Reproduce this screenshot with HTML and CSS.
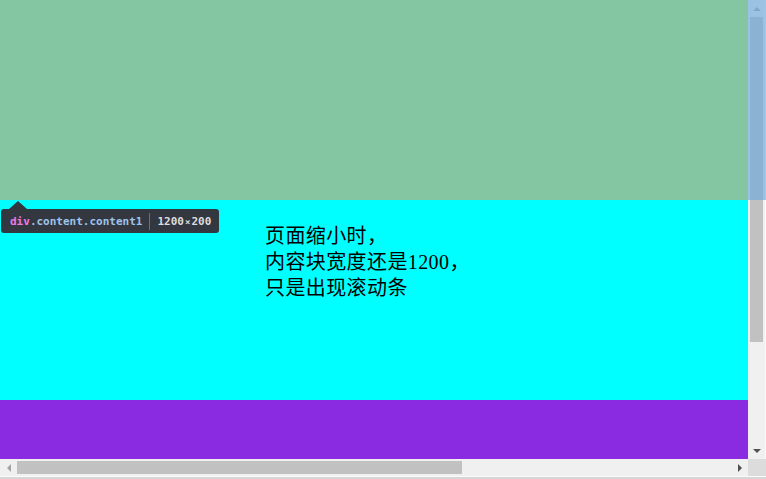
FILE: index.html
```html
<!DOCTYPE html>
<html lang="zh">
<head>
<meta charset="utf-8">
<title>content</title>
<link rel="stylesheet" href="styles.css">
</head>
<body>
<div class="window">
  <div class="main-row">
    <div class="viewport">
      <div class="page">
        <div class="content content1"></div>
        <div class="content content2">
          <p class="note">页面缩小时，<br>内容块宽度还是1200，<br>只是出现滚动条</p>
        </div>
        <div class="content content3"></div>
      </div>
    </div>
    <div class="vscroll">
      <div class="arrow-btn"><span class="tri tri-up"></span></div>
      <div class="vtrack"><div class="vthumb"></div></div>
      <div class="arrow-btn"><span class="tri tri-down"></span></div>
    </div>
  </div>
  <div class="bottom-row">
    <div class="hscroll">
      <div class="harrow-btn"><span class="tri tri-left"></span></div>
      <div class="htrack"><div class="hthumb"></div></div>
      <div class="harrow-btn"><span class="tri tri-right"></span></div>
    </div>
    <div class="corner"></div>
  </div>
  <div class="frame-edge"></div>

  <div class="highlight"></div>
  <div class="tooltip">
    <span class="tip-arrow"></span>
    <span class="tag">div</span><span class="cls">.content.content1</span><span class="sep"></span><span class="dims">1200<span class="times">×</span>200</span>
  </div>
</div>
</body>
</html>
```

FILE: styles.css
```css
html, body {
  margin: 0;
  padding: 0;
  overflow: hidden;
  background: #ffffff;
}

.window {
  position: relative;
  width: 766px;
  height: 479px;
  display: flex;
  flex-direction: column;
}

.main-row {
  display: flex;
  height: 459px;
}

.viewport {
  width: 748px;
  height: 459px;
  overflow: hidden;
}

.page {
  width: 1200px;
}

.content {
  height: 200px;
}

.content1 { background: greenyellow; }
.content2 { background: cyan; }
.content3 { background: blueviolet; }

.note {
  margin: 0;
  padding: 23px 0 0 265px;
  font-family: "Liberation Serif", "Noto Sans CJK SC", serif;
  font-size: 20px;
  line-height: 26px;
  letter-spacing: 0.4px;
  color: #000;
}

/* vertical scrollbar */
.vscroll {
  width: 17px;
  border-right: 1px solid #fafafa;
  background: #f0f0f0;
  display: flex;
  flex-direction: column;
}

.arrow-btn {
  height: 17px;
  display: flex;
  align-items: center;
  justify-content: center;
}

.vtrack {
  flex: 1;
  padding: 0 2px;
}

.vthumb {
  height: 325px;
  background: #c1c1c1;
}

/* bottom */
.bottom-row {
  display: flex;
  height: 17px;
}

.hscroll {
  width: 748px;
  display: flex;
  background: #f0f0f0;
}

.harrow-btn {
  width: 17px;
  display: flex;
  align-items: center;
  justify-content: center;
}

.htrack {
  flex: 1;
  padding: 2px 0;
}

.hthumb {
  width: 445px;
  height: 100%;
  background: #c1c1c1;
}

.corner {
  width: 18px;
  background: #dcdcdc;
}

.frame-edge {
  height: 3px;
  border-top: 1px solid #fbfbfb;
  background: #d6d6d6;
  box-sizing: border-box;
}

.tri {
  width: 0;
  height: 0;
  display: block;
}

.tri-up {
  border-left: 4px solid transparent;
  border-right: 4px solid transparent;
  border-bottom: 4px solid #a3a3a3;
}

.tri-down {
  border-left: 4px solid transparent;
  border-right: 4px solid transparent;
  border-top: 4px solid #505050;
}

.tri-left {
  border-top: 4px solid transparent;
  border-bottom: 4px solid transparent;
  border-right: 4px solid #a3a3a3;
}

.tri-right {
  border-top: 4px solid transparent;
  border-bottom: 4px solid transparent;
  border-left: 4px solid #505050;
}

/* devtools overlay */
.highlight {
  position: absolute;
  left: 0;
  top: 0;
  width: 766px;
  height: 200px;
  background: rgba(111, 168, 220, 0.66);
}

.tooltip {
  position: absolute;
  left: 1px;
  top: 209px;
  height: 24px;
  padding: 0 8px 0 9px;
  display: flex;
  align-items: center;
  background: #333740;
  border-radius: 3px;
  font-family: "DejaVu Sans Mono", monospace;
  font-size: 11px;
  font-weight: 600;
  white-space: nowrap;
}

.tip-arrow {
  position: absolute;
  left: 8px;
  top: -8px;
  width: 0;
  height: 0;
  border-left: 9px solid transparent;
  border-right: 9px solid transparent;
  border-bottom: 8px solid #333740;
}

.tag { color: #ee78e6; }
.cls { color: #9fc3e8; }
.sep {
  width: 1px;
  height: 17px;
  background: #6e6e6e;
  margin: 0 7px;
}
.dims { color: #dcdcdc; }
.times {
  font-size: 9px;
  margin: 0 1px;
}
```
